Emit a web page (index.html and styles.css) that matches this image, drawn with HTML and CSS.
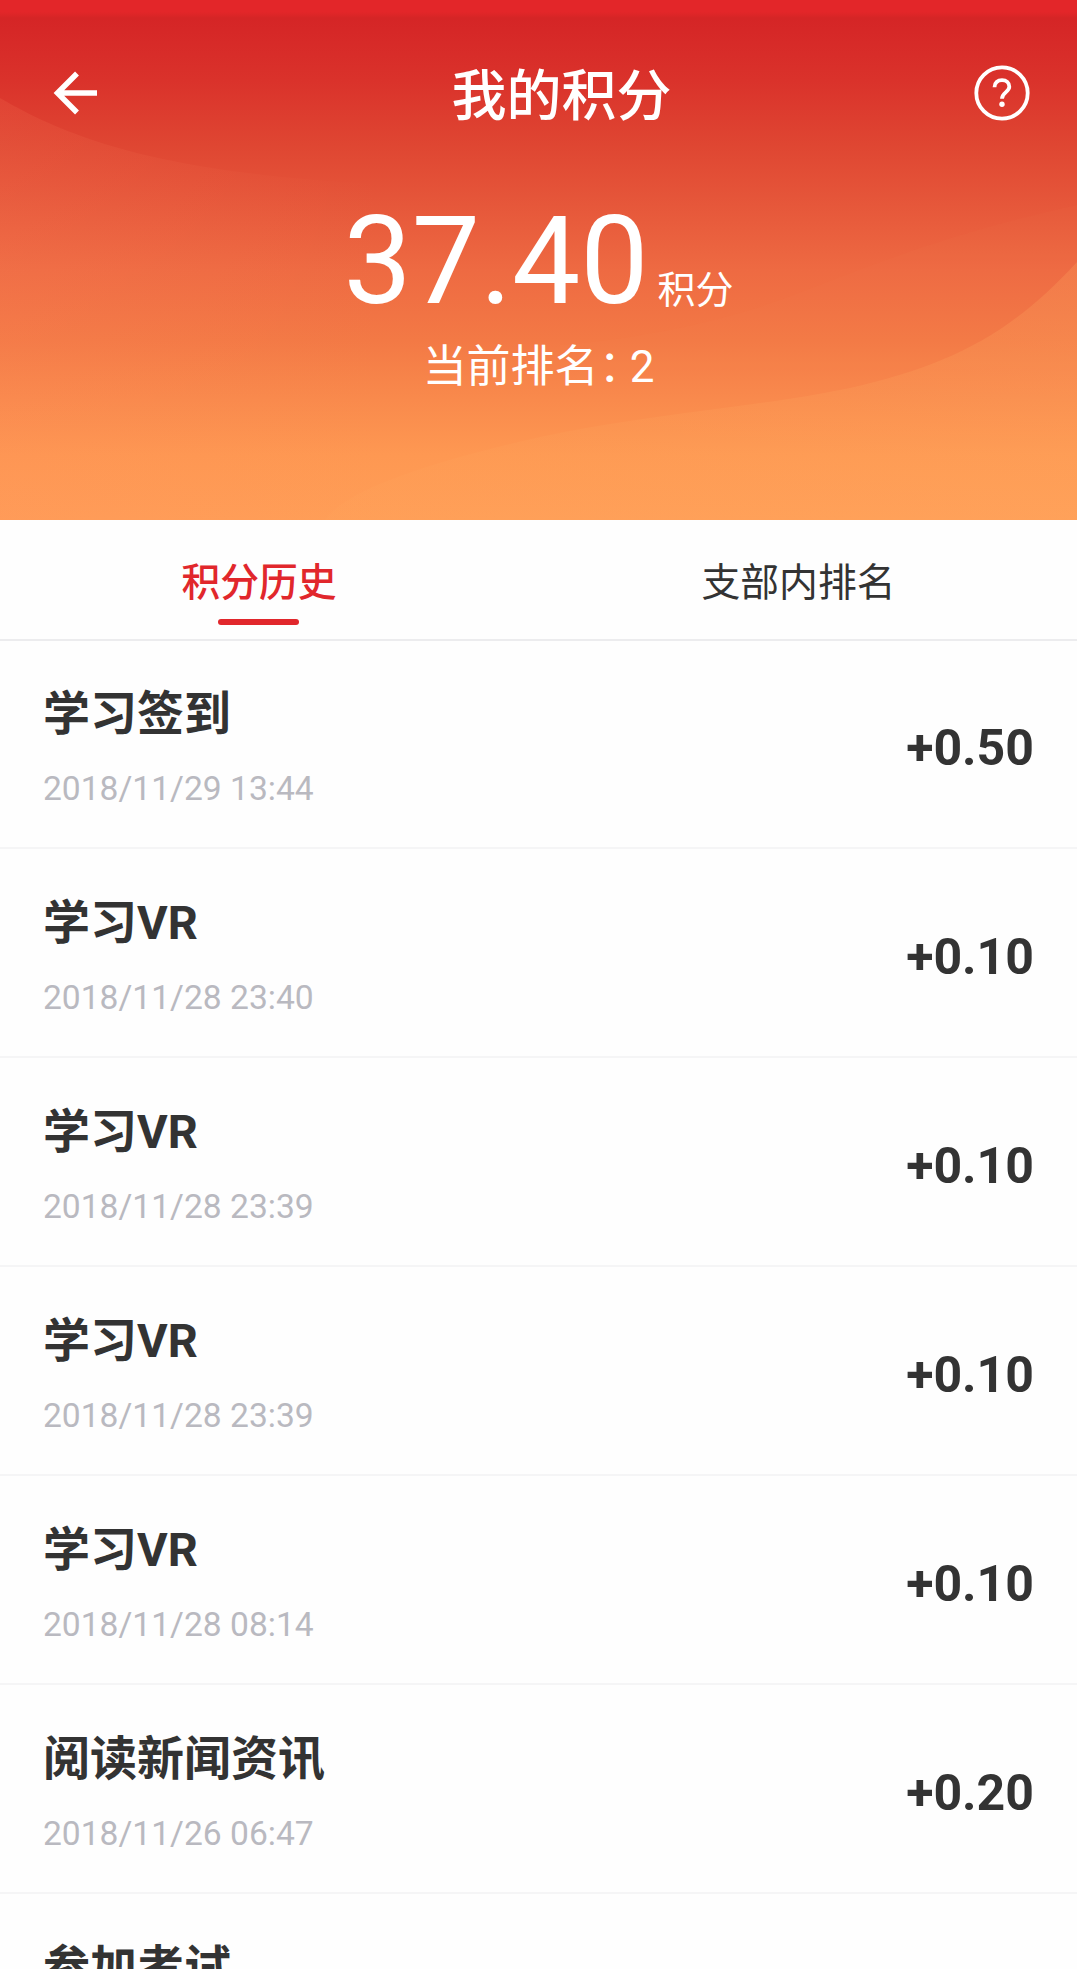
FILE: index.html
```
<!DOCTYPE html>
<html lang="zh-CN">
<head>
    <meta charset="UTF-8">
    <meta name="viewport" content="width=device-width, initial-scale=1.0">
    <title>我的积分</title>
    <link rel="stylesheet" href="styles.css">
</head>
<body>
    <header class="header">
        <svg class="header-bg" viewBox="0 0 1077 520" preserveAspectRatio="none">
            <defs>
                <linearGradient id="fadeLeft" x1="0" y1="0" x2="1" y2="0">
                    <stop offset="0" stop-color="#ff8a62" stop-opacity="0.14"/>
                    <stop offset="1" stop-color="#ff8a62" stop-opacity="0"/>
                </linearGradient>
                <linearGradient id="fadeRight" x1="0" y1="0" x2="1" y2="0">
                    <stop offset="0" stop-color="#ffac62" stop-opacity="0.1"/>
                    <stop offset="1" stop-color="#ffac62" stop-opacity="0.24"/>
                </linearGradient>
            </defs>
            <path fill="url(#fadeLeft)" d="M0 98C80 145 180 174 380 184L380 520H0Z"/>
            <path fill="#ffa060" fill-opacity="0.04" d="M1077 205C940 235 860 270 780 300C700 328 620 340 560 345L560 400H1077Z"/>
            <path fill="url(#fadeRight)" d="M1077 262C1010 335 950 365 850 388C760 407 640 415 540 437C430 462 345 490 325 520H1077Z"/>
        </svg>

        <div class="nav">
            <svg class="icon-back" viewBox="0 0 48 48">
                <path d="M46 24H6M26 4.5L6.5 24L26 43.5"/>
            </svg>
            <h1>我的积分</h1>
            <svg class="icon-help" viewBox="0 0 56 56">
                <circle class="ring" cx="28" cy="28" r="25.7"/>
                <path class="hook" d="M20.5 22.2C20.5 17.6 23.7 15.2 28 15.2C32.3 15.2 35.3 17.8 35.3 21.8C35.3 27 28 27.4 28 33.8"/>
                <circle class="dot" cx="28" cy="39.3" r="2.7"/>
            </svg>
        </div>

        <div class="score">
            <span class="score-value">37.40</span>
            <span class="score-unit">积分</span>
        </div>
        <div class="rank">当前排名<span class="colon">：</span>2</div>
    </header>

    <div class="tabs">
        <div class="tab active">积分历史</div>
        <div class="tab">支部内排名</div>
    </div>

    <ul class="list">
        <li class="item">
            <div>
                <div class="item-title">学习签到</div>
                <div class="item-time">2018/11/29 13:44</div>
            </div>
            <div class="item-points">+0.50</div>
        </li>
        <li class="item">
            <div>
                <div class="item-title">学习VR</div>
                <div class="item-time">2018/11/28 23:40</div>
            </div>
            <div class="item-points">+0.10</div>
        </li>
        <li class="item">
            <div>
                <div class="item-title">学习VR</div>
                <div class="item-time">2018/11/28 23:39</div>
            </div>
            <div class="item-points">+0.10</div>
        </li>
        <li class="item">
            <div>
                <div class="item-title">学习VR</div>
                <div class="item-time">2018/11/28 23:39</div>
            </div>
            <div class="item-points">+0.10</div>
        </li>
        <li class="item">
            <div>
                <div class="item-title">学习VR</div>
                <div class="item-time">2018/11/28 08:14</div>
            </div>
            <div class="item-points">+0.10</div>
        </li>
        <li class="item">
            <div>
                <div class="item-title">阅读新闻资讯</div>
                <div class="item-time">2018/11/26 06:47</div>
            </div>
            <div class="item-points">+0.20</div>
        </li>
        <li class="item">
            <div>
                <div class="item-title">参加考试</div>
            </div>
        </li>
    </ul>
</body>
</html>
```
FILE: styles.css
```
:root {
    --primary: #e1272c;
    --text: #333333;
    --muted: #b9b9c0;
    --line: #ececee;
    --line-light: #f5f5f6;
}

* {
    box-sizing: border-box;
    margin: 0;
    padding: 0;
}

body {
    height: 1969px;
    overflow: hidden;
    font-family: Roboto, "Noto Sans CJK SC", sans-serif;
    font-kerning: none;
    background: #fefefe;
    color: var(--text);
}

/* Header */
.header {
    position: relative;
    height: 520px;
    color: #fff;
    background: linear-gradient(#e32629 0, #e32629 12px, #d52526 18px, #da322b 80px, #df4632 145px, #e6573a 205px, #ee6a42 270px, #f37945 340px, #f98a4c 400px, #fe9852 455px, #ff9e57 520px);
}

.header-bg {
    position: absolute;
    top: 0;
    left: 0;
    width: 100%;
    height: 100%;
}

.nav {
    position: relative;
    display: flex;
    align-items: center;
    justify-content: space-between;
    height: 185px;
    padding: 0 47px 0 51px;
}

.nav h1 {
    padding: 6px 0 0 50px;
    font-size: 55px;
    font-weight: 500;
    line-height: 80px;
}

.icon-back {
    width: 48px;
    height: 48px;
    fill: none;
    stroke: #fff;
    stroke-width: 5.5;
}

.icon-help {
    width: 56px;
    height: 56px;
    fill: none;
    stroke: #fff;
}

.icon-help .ring {
    stroke-width: 3.8;
}

.icon-help .hook {
    stroke-width: 3.8;
}

.icon-help .dot {
    fill: #fff;
    stroke: none;
}

.score {
    position: relative;
    display: flex;
    align-items: baseline;
    justify-content: center;
    height: 146px;
    padding-top: 5px;
    line-height: 144px;
}

.score-value {
    font-size: 121.5px;
}

.score-unit {
    margin-left: 9px;
    font-size: 38px;
    line-height: 1;
}

.rank {
    position: relative;
    font-size: 44px;
    line-height: 72px;
    text-align: center;
}

.rank .colon {
    margin-right: 9px;
    font-feature-settings: "halt";
}

/* Tabs */
.tabs {
    display: flex;
    height: 121px;
    border-bottom: 2px solid var(--line);
}

.tab {
    position: relative;
    width: 559px;
    padding: 33px 0 0 2px;
    font-size: 38.8px;
    line-height: 60px;
    text-align: center;
}

.tab.active {
    width: 518px;
    padding-left: 0;
    color: var(--primary);
    font-weight: 500;
}

.tab.active::after {
    content: "";
    position: absolute;
    left: 50%;
    top: 99px;
    width: 81px;
    height: 6px;
    margin-left: -41px;
    border-radius: 3px;
    background: var(--primary);
}

/* Points history */
.list {
    list-style: none;
}

.item {
    display: flex;
    justify-content: space-between;
    height: 209px;
    padding: 43px 43px 0;
    border-bottom: 2px solid var(--line-light);
}

.item:first-child {
    height: 208px;
    padding-top: 43px;
}

.item:not(:first-child) {
    padding-top: 44px;
}

.item-title {
    font-size: 47px;
    font-weight: 700;
    line-height: 60px;
}

.item-time {
    margin-top: 22px;
    font-size: 33.6px;
    line-height: 46px;
    color: var(--muted);
}

.item-points {
    margin-top: 34px;
    font-size: 50px;
    font-weight: 700;
    line-height: 60px;
}
```
